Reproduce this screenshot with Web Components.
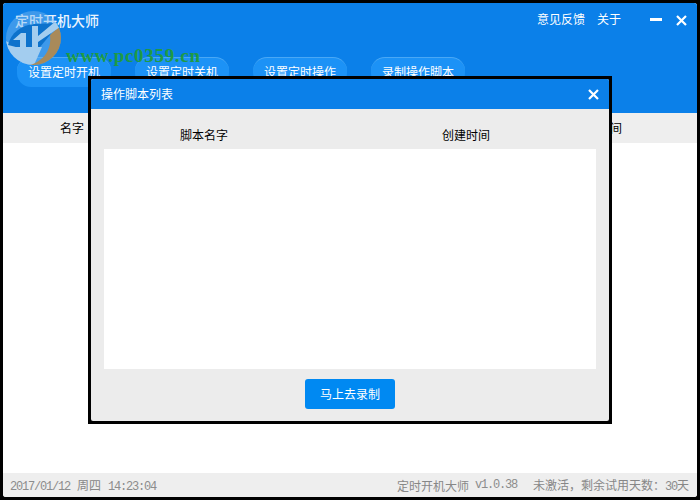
<!DOCTYPE html>
<html lang="zh">
<head>
<meta charset="utf-8">
<title>定时开机大师</title>
<style>
html, body { margin: 0; background: #fff; }
body { font: 12px "Noto Sans CJK SC", "Liberation Sans", sans-serif; }
</style>
</head>
<body>
<app-window>
    <title-bar slot="top">
        <nav-button>设置定时开机</nav-button>
        <nav-button>设置定时关机</nav-button>
        <nav-button>设置定时操作</nav-button>
        <nav-button>录制操作脚本</nav-button>
    </title-bar>
    <column-head slot="top" class="main"></column-head>
    <status-bar slot="bottom"></status-bar>
    <logo-mark slot="over"></logo-mark>
    <script-dialog slot="over"></script-dialog>
</app-window>

<script>
const CJK = '"Noto Sans CJK SC", "Liberation Sans", sans-serif';

class AppWindow extends HTMLElement {
    constructor() {
        super();
        this.attachShadow({ mode: 'open' });
        this.shadowRoot.innerHTML = `
        <style>
            :host {
                display: block;
                position: relative;
                width: 700px;
                height: 500px;
                box-sizing: border-box;
                background: #000;
                padding: 3px;
                overflow: hidden;
            }
            .inner {
                height: 100%;
                display: flex;
                flex-direction: column;
                background: #fff;
                border-radius: 3px;
                overflow: hidden;
            }
            .body { flex: 1; }
        </style>
        <div class="inner">
            <slot name="top"></slot>
            <div class="body"></div>
            <slot name="bottom"></slot>
        </div>
        <slot name="over"></slot>
        `;
    }
}

class TitleBar extends HTMLElement {
    constructor() {
        super();
        this.attachShadow({ mode: 'open' });
        this.shadowRoot.innerHTML = `
        <style>
            :host {
                display: block;
                height: 110px;
                background: #0b80e9;
                color: #fff;
            }
            .row {
                height: 36px;
                display: flex;
                align-items: center;
                padding: 0 10px 0 12px;
            }
            .name { font-size: 14px; font-weight: 500; color: #eaf4fd; padding-bottom: 2px; }
            .links { margin-left: auto; display: flex; gap: 12px; font-size: 12px; margin-right: 29px; padding-bottom: 5px; }
            .btn { display: flex; gap: 14px; align-items: center; padding-bottom: 2px; }
            svg { display: block; }
            .nav { display: flex; gap: 24px; padding: 18px 0 0 14px; }
        </style>
        <div class="row">
            <span class="name">定时开机大师</span>
            <div class="links"><span>意见反馈</span><span>关于</span></div>
            <div class="btn">
                <svg width="12" height="12" viewBox="0 0 12 12"><rect x="0" y="4" width="12" height="3" fill="#fff"/></svg>
                <svg width="11" height="11" viewBox="0 0 11 11"><path d="M1 1l9 9M10 1l-9 9" stroke="#fff" stroke-width="2.2" fill="none"/></svg>
            </div>
        </div>
        <div class="nav"><slot></slot></div>
        `;
    }
}

class NavButton extends HTMLElement {
    constructor() {
        super();
        this.attachShadow({ mode: 'open' });
        this.shadowRoot.innerHTML = `
        <style>
            :host {
                display: flex;
                align-items: center;
                justify-content: center;
                box-sizing: border-box;
                width: 94px;
                height: 30px;
                padding-bottom: 2px;
                background: #1c92f6;
                border-top: 1px solid #4aa8f5;
                border-radius: 14px;
                color: #fff;
                font-size: 12px;
                line-height: 14px;
            }
        </style>
        <slot></slot>
        `;
    }
}

class ColumnHead extends HTMLElement {
    constructor() {
        super();
        this.attachShadow({ mode: 'open' });
        const first = this.getAttribute('first') || '名字';
        this.shadowRoot.innerHTML = `
        <style>
            :host {
                display: flex;
                justify-content: space-between;
                align-items: center;
                box-sizing: border-box;
                height: 30px;
                padding: 0 75px 2px 57px;
                background: #eee;
                color: #000;
                font-size: 12px;
            }
            :host(.dialog) { height: 40px; padding: 10px 119px 0 89px; background: none; flex: none; }
        </style>
        <span>${first}</span><span>创建时间</span>
        `;
    }
}

class StatusBar extends HTMLElement {
    constructor() {
        super();
        this.attachShadow({ mode: 'open' });
        this.shadowRoot.innerHTML = `
        <style>
            :host {
                display: flex;
                align-items: center;
                height: 24px;
                padding: 0 8px 0 7px;
                background: #eee;
                color: #878787;
                font-size: 12px;
            }
            .m { font: 12px "Liberation Mono", monospace; letter-spacing: -1.2px; color: #8c8c8c; }
            .day { margin: 0 7px; }
            .right { margin-left: auto; display: flex; align-items: center; gap: 6px; }
            .gap { margin-left: 16px; }
        </style>
        <span><span class="m">2017/01/12</span><span class="day">周四</span><span class="m">14:23:04</span></span>
        <span class="right"><span>定时开机大师</span><span class="m">v1.0.38</span></span>
        <span class="gap">未激活&#xFF0C;剩余试用天数&#xFF1A;<span class="m">30</span>天</span>
        `;
    }
}

class ScriptDialog extends HTMLElement {
    constructor() {
        super();
        this.attachShadow({ mode: 'open' });
        this.shadowRoot.innerHTML = `
        <style>
            :host {
                position: absolute;
                left: 88px;
                top: 76px;
                width: 524px;
                height: 348px;
                box-sizing: border-box;
                background: #000;
                padding: 3px;
                display: block;
            }
            .box {
                height: 100%;
                display: flex;
                flex-direction: column;
                background: #ececec;
                border-radius: 2px;
                overflow: hidden;
            }
            .head {
                height: 30px;
                box-sizing: border-box;
                flex: none;
                display: flex;
                align-items: center;
                justify-content: space-between;
                padding: 0 10px 2px 10px;
                background: #0b80e9;
                color: #fff;
                font-size: 12px;
            }
            .head svg { position: relative; top: 1px; }
            svg { display: block; }
            .list { height: 220px; margin: 0 13px; background: #fff; flex: none; }
            .foot { display: flex; justify-content: center; padding-top: 10px; }
            button {
                width: 90px;
                height: 30px;
                border: 0;
                padding: 0 0 2px;
                border-radius: 3px;
                background: #0089f2;
                color: #fff;
                font: 12px ${CJK};
            }
        </style>
        <div class="box">
            <div class="head">
                <span>操作脚本列表</span>
                <svg width="11" height="11" viewBox="0 0 11 11"><path d="M1 1l9 9M10 1l-9 9" stroke="#fff" stroke-width="2.2" fill="none"/></svg>
            </div>
            <column-head class="dialog" first="脚本名字"></column-head>
            <div class="list"></div>
            <div class="foot"><button>马上去录制</button></div>
        </div>
        `;
    }
}

// site watermark stamped over the top left corner of the screenshot
class LogoMark extends HTMLElement {
    constructor() {
        super();
        this.attachShadow({ mode: 'open' });
        this.shadowRoot.innerHTML = `
        <style>
            :host { position: absolute; left: 0; top: 0; display: block; pointer-events: none; }
            svg { position: absolute; left: 6px; top: 11px; display: block; }
            .url {
                position: absolute;
                left: 66px;
                top: 49px;
                font: 700 19px/14px "Liberation Serif", serif;
                letter-spacing: 0.7px;
                color: #1f9a45;
                white-space: nowrap;
            }
        </style>
        <svg width="55" height="54" viewBox="0 0 55 54">
            <defs><clipPath id="c"><ellipse cx="27.5" cy="27" rx="27.5" ry="27"/></clipPath></defs>
            <g clip-path="url(#c)">
                <rect width="55" height="54" fill="#7ab8ee" fill-opacity=".45"/>
                <path d="M0 30L10 36H36L28 54H0z" fill="#a3cdef"/>
                <path d="M55 14V54H24C38 50 46 38 44 24z" fill="#a98a5a"/>
                <path d="M2 34C5 22 15 14 28 13L50 12 44 24 34 36H10z" fill="#0d72cc"/>
                <path d="M7 29L15 22H20V36H14V29z" fill="#a3cdef"/>
                <path d="M26 15H32V36H26zM32 25L50 10 54 16 32 31z" fill="#a3cdef"/>
            </g>
        </svg>
        <span class="url">www.pc0359.cn</span>
        `;
    }
}

customElements.define('app-window', AppWindow);
customElements.define('title-bar', TitleBar);
customElements.define('nav-button', NavButton);
customElements.define('column-head', ColumnHead);
customElements.define('status-bar', StatusBar);
customElements.define('script-dialog', ScriptDialog);
customElements.define('logo-mark', LogoMark);
</script>
</body>
</html>
